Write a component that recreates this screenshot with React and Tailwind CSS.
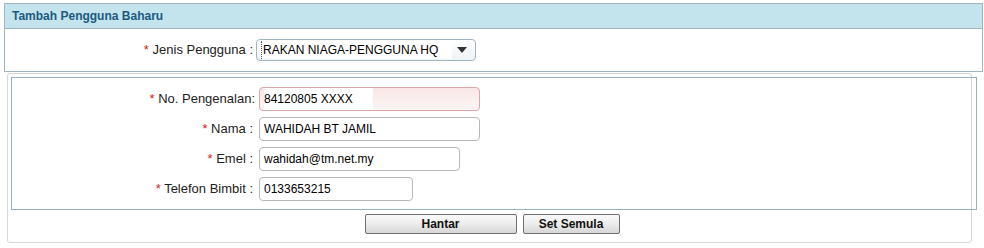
import React from "react";

const font = { fontFamily: '"Liberation Sans", Arial, sans-serif' };

function Label({ children, className = "" }) {
  return (
    <div className={"text-right text-[13px] text-[#222] whitespace-nowrap " + className}>
      <span className="text-[#d52020]">*</span> {children}
    </div>
  );
}

function TextInput({ value, width, pink }) {
  return (
    <div
      className={
        "h-[24px] rounded-[4px] border flex items-center pl-[4px] text-[12px] text-black " +
        (pink
          ? "border-[#dba7a7] bg-gradient-to-b from-[#f9e6e6] to-[#fdf5f5]"
          : "border-[#b8b8b8] bg-white")
      }
      style={{ width }}
    >
      <span className={pink ? "bg-white pr-[20px] py-[2px]" : ""}>{value}</span>
    </div>
  );
}

function Button({ children, className = "" }) {
  return (
    <button
      className={
        "h-[20px] rounded-[2px] border border-[#6f6f6f] bg-gradient-to-b from-[#fafafa] via-[#ececec] to-[#d6d6d6] text-[12px] font-bold text-[#111] leading-none " +
        className
      }
      style={font}
    >
      {children}
    </button>
  );
}

export default function App() {
  return (
    <div className="w-[984px] h-[248px] bg-white pt-[3px] pl-[4px]" style={font}>
      <div className="w-[979px] border border-[#9fb7c4]">
        <div className="h-[25px] bg-[#c3e4ed] border-b border-[#9fb7c4] flex items-center pl-[7px]">
          <span className="text-[12px] font-bold text-[#1c5a80]">Tambah Pengguna Baharu</span>
        </div>
        <div className="h-[42px] flex items-center">
          <Label className="w-[248px]">Jenis Pengguna :</Label>
          <div className="ml-[3px] w-[220px] h-[22px] rounded-[4px] border border-[#9eb5c4] bg-gradient-to-b from-white to-[#eef3f6] flex items-center pl-[4px] pr-[8px] text-[12px] text-black">
            <span className="bg-white pr-[14px] border-l border-dotted border-[#555] pl-[1px]">RAKAN NIAGA-PENGGUNA HQ</span>
            <span className="ml-auto w-0 h-0 border-l-[5px] border-r-[5px] border-t-[6px] border-l-transparent border-r-transparent border-t-[#333]"></span>
          </div>
        </div>
      </div>
      <div className="ml-[3px] mt-[1px] w-[965px] h-[170px] border border-[#d6d6d6] rounded-[3px] pt-[3px] pl-[3px]">
        <div className="w-[966px] h-[133px] border border-[#93b3c3] pt-[9px] flex flex-col gap-[6px]">
          <div className="flex items-center">
            <Label className="w-[243px]">No. Pengenalan:</Label>
            <div className="ml-[4px]"><TextInput value="84120805 XXXX" width={221} pink /></div>
          </div>
          <div className="flex items-center">
            <Label className="w-[241px]">Nama :</Label>
            <div className="ml-[6px]"><TextInput value="WAHIDAH BT JAMIL" width={221} /></div>
          </div>
          <div className="flex items-center">
            <Label className="w-[241px]">Emel :</Label>
            <div className="ml-[6px]"><TextInput value="wahidah@tm.net.my" width={201} /></div>
          </div>
          <div className="flex items-center">
            <Label className="w-[241px]">Telefon Bimbit :</Label>
            <div className="ml-[6px]"><TextInput value="0133653215" width={154} /></div>
          </div>
        </div>
      </div>
      <div className="-mt-[29px] flex justify-center gap-[6px] pr-[4px]">
        <Button className="w-[152px]">Hantar</Button>
        <Button className="w-[97px]">Set Semula</Button>
      </div>
    </div>
  );
}
